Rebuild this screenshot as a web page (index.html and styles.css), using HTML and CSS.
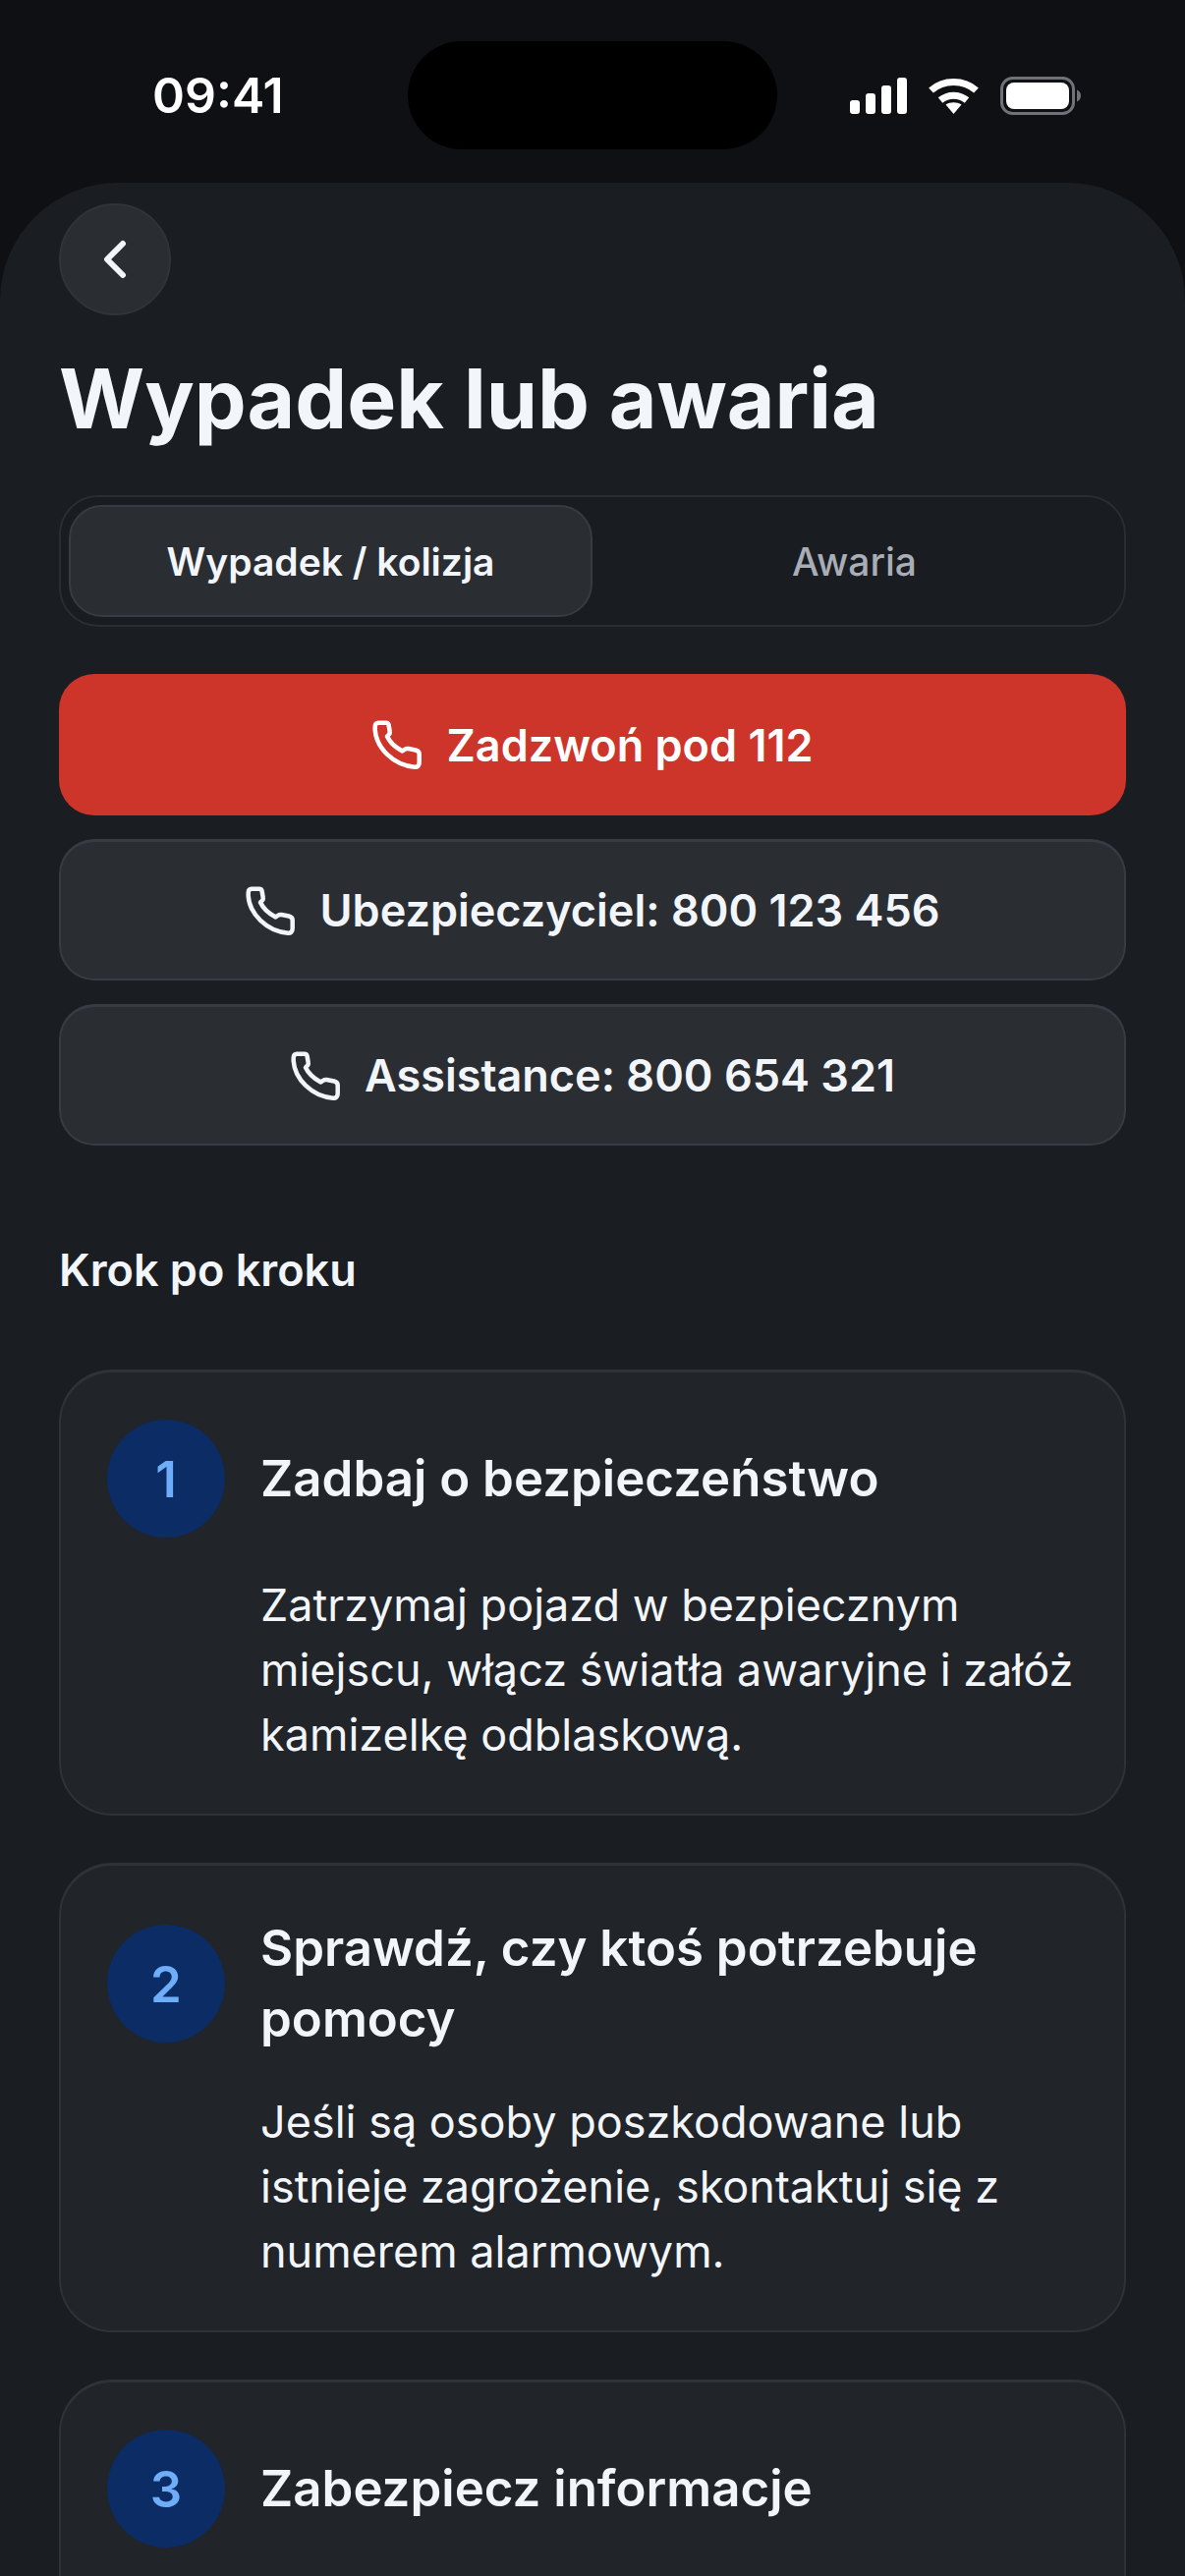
FILE: index.html
```html
<!DOCTYPE html>
<html lang="pl">
<head>
  <meta charset="UTF-8">
  <meta name="viewport" content="width=device-width, initial-scale=1.0">
  <title>Wypadek lub awaria</title>
  <link rel="stylesheet" href="styles.css">
</head>
<body>
  <div class="phone">
    <div class="status-bar">
      <div class="time">09:41</div>
      <div class="island"></div>
      <div class="status-icons">
        <svg class="signal" width="58" height="37" viewBox="0 0 58 37" fill="#fff">
          <rect x="0" y="23" width="10" height="14" rx="3"/>
          <rect x="16" y="16" width="10" height="21" rx="3"/>
          <rect x="32" y="8" width="10" height="29" rx="3"/>
          <rect x="48" y="0" width="10" height="37" rx="3"/>
        </svg>
        <svg class="wifi" width="51" height="37" viewBox="0 0 51 37" fill="none" stroke="#fff" stroke-width="7">
          <path d="M2.500 13C15 1.500 36 1.500 48.500 13"/>
          <path d="M12 23C20 16.500 31 16.500 39 23"/>
          <path d="M17.500 27.500L25.500 37L33.500 27.500C29 24.500 22 24.500 17.500 27.500Z" fill="#fff" stroke="none"/>
        </svg>
        <svg class="battery" width="82" height="39" viewBox="0 0 82 39" fill="none">
          <rect x="1.500" y="1.500" width="73" height="36" rx="11" stroke="#6f7278" stroke-width="3"/>
          <rect x="6" y="6" width="64" height="27" rx="8" fill="#fff"/>
          <path d="M78 13.500C80.500 14.500 82 16.500 82 19.500C82 22.500 80.500 24.500 78 25.500Z" fill="#6f7278"/>
        </svg>
      </div>
    </div>

    <div class="sheet">
      <button class="back">
        <svg width="48" height="48" viewBox="0 0 48 48" fill="none" stroke="#f2f5fa" stroke-width="6" stroke-linecap="round" stroke-linejoin="round">
          <path d="M32 8L16 24L32 40"/>
        </svg>
      </button>

      <h1 class="title">Wypadek lub awaria</h1>

      <div class="tabs">
        <div class="tab active">Wypadek / kolizja</div>
        <div class="tab">Awaria</div>
      </div>

      <div class="calls">
        <div class="call call-red">
          <svg class="call-icon" viewBox="0 0 52 52"><path d="M7 3.700H15C16.500 3.700 17.300 4.500 17.600 6L18.700 12.500C19 14 18.500 15.300 17.300 16.200L16 17.500C18.500 23 24 28.500 31.500 32.500L33.500 31C35 30 36 29.700 37.500 30L45 31.500C47 32 48.700 33.500 48.700 35.500V44C48.700 47 47 49 44 48.700C22 47 5 29 3.700 11V8C3.700 5 5 3.700 7 3.700Z"/></svg>
          Zadzwoń pod 112
        </div>
        <div class="call">
          <svg class="call-icon" viewBox="0 0 52 52"><path d="M7 3.700H15C16.500 3.700 17.300 4.500 17.600 6L18.700 12.500C19 14 18.500 15.300 17.300 16.200L16 17.500C18.500 23 24 28.500 31.500 32.500L33.500 31C35 30 36 29.700 37.500 30L45 31.500C47 32 48.700 33.500 48.700 35.500V44C48.700 47 47 49 44 48.700C22 47 5 29 3.700 11V8C3.700 5 5 3.700 7 3.700Z"/></svg>
          Ubezpieczyciel: 800 123 456
        </div>
        <div class="call">
          <svg class="call-icon" viewBox="0 0 52 52"><path d="M7 3.700H15C16.500 3.700 17.300 4.500 17.600 6L18.700 12.500C19 14 18.500 15.300 17.300 16.200L16 17.500C18.500 23 24 28.500 31.500 32.500L33.500 31C35 30 36 29.700 37.500 30L45 31.500C47 32 48.700 33.500 48.700 35.500V44C48.700 47 47 49 44 48.700C22 47 5 29 3.700 11V8C3.700 5 5 3.700 7 3.700Z"/></svg>
          Assistance: 800 654 321
        </div>
      </div>

      <h2 class="section-title">Krok po kroku</h2>

      <div class="steps">
        <div class="step">
          <div class="step-head">
            <div class="step-num">1</div>
            <div class="step-title">Zadbaj o bezpieczeństwo</div>
          </div>
          <p class="step-text">Zatrzymaj pojazd w bezpiecznym miejscu, włącz światła awaryjne i załóż kamizelkę odblaskową.</p>
        </div>
        <div class="step">
          <div class="step-head">
            <div class="step-num">2</div>
            <div class="step-title">Sprawdź, czy ktoś potrzebuje pomocy</div>
          </div>
          <p class="step-text">Jeśli są osoby poszkodowane lub istnieje zagrożenie, skontaktuj się z numerem alarmowym.</p>
        </div>
        <div class="step step-last">
          <div class="step-head">
            <div class="step-num">3</div>
            <div class="step-title">Zabezpiecz informacje</div>
          </div>
        </div>
      </div>
    </div>
  </div>
</body>
</html>
```
FILE: styles.css
```css
* {
  box-sizing: border-box;
}

html, body {
  margin: 0;
  padding: 0;
}

body {
  background-color: #0e1013;
  color: #f2f5fa;
  font-family: Inter, "Noto Sans", sans-serif;
}

.phone {
  width: 1206px;
  height: 2622px;
  overflow: hidden;
}

.status-bar {
  height: 186px;
  position: relative;
  display: flex;
  justify-content: space-between;
  align-items: center;
  padding: 8px 106px 0 155px;
}

.time {
  color: #fff;
  font-size: 50px;
  font-weight: 600;
}

.island {
  position: absolute;
  left: 415px;
  top: 42px;
  width: 376px;
  height: 110px;
  background-color: #000;
  border-radius: 55px;
}

.status-icons {
  display: flex;
  align-items: center;
  gap: 22px;
}

.sheet {
  height: 2436px;
  background-color: #1a1d21;
  border-radius: 120px 120px 0 0;
  padding: 21px 60px 0;
}

.back {
  width: 114px;
  height: 114px;
  padding: 0;
  border: 2px solid #30343a;
  border-radius: 50%;
  background-color: #2a2e33;
  display: flex;
  align-items: center;
  justify-content: center;
}

.title {
  margin: 32px 0 0;
  font-size: 84px;
  line-height: 106px;
  font-weight: 700;
  color: #f2f5fa;
}

.tabs {
  margin-top: 45px;
  height: 134px;
  display: flex;
  padding: 8px;
  border: 2px solid #2a2e33;
  border-radius: 40px;
  background-color: #191c20;
}

.tab {
  flex: 1;
  display: flex;
  align-items: center;
  justify-content: center;
  font-size: 39px;
  font-weight: 500;
  color: #a9aeb6;
  border-radius: 34px;
  border: 2px solid transparent;
}

.tab.active {
  color: #f2f5fa;
  font-weight: 600;
  background-color: #2a2e33;
  border-color: #383c42;
}

.calls {
  margin-top: 48px;
  display: flex;
  flex-direction: column;
  gap: 24px;
}

.call {
  height: 144px;
  display: flex;
  align-items: center;
  justify-content: center;
  gap: 24px;
  font-size: 45px;
  font-weight: 600;
  color: #f2f5fa;
  background-color: #2a2e33;
  border: 2px solid #383c42;
  border-top-width: 3px;
  border-radius: 36px;
}

.call-red {
  color: #fff;
  background-color: #cd342a;
  border: none;
}

.call-icon {
  width: 52px;
  height: 52px;
  fill: none;
  stroke: currentColor;
  stroke-width: 4.500;
  stroke-linejoin: round;
}

.section-title {
  margin: 97px 0 0;
  font-size: 45px;
  line-height: 60px;
  font-weight: 600;
  color: #f2f5fa;
}

.steps {
  margin-top: 71px;
  display: flex;
  flex-direction: column;
  gap: 48px;
}

.step {
  background-color: #212429;
  border: 2px solid #2f3237;
  border-top-width: 3px;
  border-radius: 54px;
  padding: 48px 47px 47px;
}

.step-last {
  min-height: 400px;
}

.step-head {
  display: flex;
  align-items: center;
  gap: 36px;
}

.step-num {
  flex: none;
  width: 120px;
  height: 120px;
  border-radius: 50%;
  background-color: #0b2c64;
  color: #6eaef8;
  display: flex;
  align-items: center;
  justify-content: center;
  font-size: 51px;
  font-weight: 600;
}

.step-title {
  font-size: 51px;
  line-height: 72px;
  font-weight: 600;
  color: #f2f5fa;
}

.step-text {
  margin: 36px 0 0 156px;
  font-size: 45px;
  line-height: 66px;
  font-weight: 400;
  color: #f2f5fa;
}
```
